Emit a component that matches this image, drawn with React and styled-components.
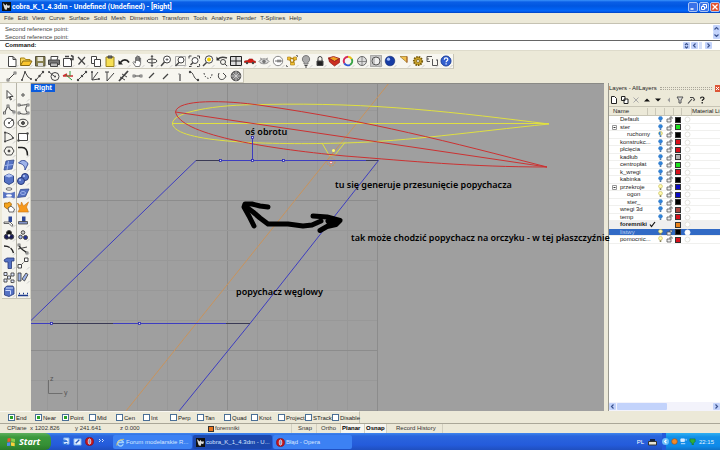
import React from "react";
import styled, { createGlobalStyle, css } from "styled-components";

const UI = `"Liberation Sans", Arial, sans-serif`;
const TITLE = `"Roboto", "Open Sans", sans-serif`;
const NOTE = `"Noto Sans", sans-serif`;

const Global = createGlobalStyle`
  *, *::before, *::after { box-sizing: border-box; }
  body { margin: 0; overflow: hidden; background: #ece9d8; }
  button, input { font: inherit; margin: 0; padding: 0; border: 0; background: none; color: inherit; }
  svg { display: block; }
`;

const Window = styled.div`
  display: flex;
  flex-direction: column;
  min-height: 100vh;
  font: 6px/8px ${UI};
  color: #222;
  background: #ece9d8;
`;

/* ---------- title and menu ---------- */

const TitleBar = styled.header`
  display: flex;
  align-items: center;
  gap: 1px;
  height: 13px;
  padding-left: 2px;
  background: linear-gradient(#3a93fb 0, #0b5fe6 2px, #0056e0 6px, #0266fa 11px, #0040c0 13px);
`;
const Title = styled.h1`
  flex: 1;
  margin: 0;
  font: bold 7px/12px ${TITLE};
  color: #fff;
  white-space: nowrap;
`;
const CaptionButton = styled.button`
  display: grid;
  place-items: center;
  width: 10px;
  height: 10px;
  border: 1px solid #a9c4f5;
  border-radius: 2px;
  background: ${(p) => (p.$close ? "#e2512c" : "#3a72e8")};
`;
const MenuBar = styled.nav`
  display: flex;
  height: 10px;
  padding: 0 4px;
  gap: 4px;
  line-height: 9px;
`;
const MenuItem = styled.button`
  color: #333;
  white-space: nowrap;
`;

/* ---------- command area ---------- */

const CommandArea = styled.section`
  border-top: 1px solid #c5c2b2;
  background: #fff;
  height: 28px;
  margin-bottom: 3px;
  border-bottom: 1px solid #dedbcb;
`;
const History = styled.div`
  display: flex;
  height: 17px;
  padding-left: 5px;
  border-bottom: 1px solid #666;
`;
const HistoryText = styled.div`
  flex: 1;
  padding-top: 1px;
  color: #444;
`;
const Spinner = styled.div`
  display: flex;
  flex-direction: column;
  width: 7px;
  padding-top: 1px;
`;
const Prompt = styled.label`
  display: flex;
  height: 9px;
  padding-left: 5px;
  font-weight: bold;
  color: #111;
`;
const PromptInput = styled.input`
  flex: 1;
  min-width: 0;
  outline: none;
`;
const PromptArrows = styled.div`
  display: flex;
  gap: 1px;
  padding: 1px 0 0;
  margin-right: 8px;
`;
const PromptThumb = styled.span`
  width: 3px;
  height: 7px;
  margin-right: 2px;
  background: #d5e0fb;
`;
const ScrollButton = styled.button`
  display: grid;
  place-items: center;
  width: 7px;
  height: 7px;
  border-radius: 1px;
  background: #c3d3fb;
`;

/* ---------- toolbars ---------- */

const ToolStrip = styled.div`
  display: flex;
  align-self: flex-start;
  height: ${(p) => (p.$tall ? 15 : 14)}px;
  padding-left: 5px;
  border-right: 1px solid #c9c6b6;
  border-bottom: 1px solid #cfccbd;
  background: #f7f6f0;
`;
const ToolButton = styled.button`
  width: 14px;
  height: 14px;
  display: grid;
  place-items: center;
`;
const Palette = styled.aside`
  display: grid;
  grid-template-columns: 14px 14px;
  grid-auto-rows: 14px;
  align-content: start;
  align-self: flex-start;
  margin-left: 2px;
  padding-top: 5px;
  background: linear-gradient(90deg, #f5f4ee 14px, #b5b3a8 14px, #b5b3a8 15px, #f5f4ee 15px);
  border-bottom: 1px solid #c9c6b6;
  border-right: 1px solid #d4d2c6;
`;

/* ---------- workspace ---------- */

const Workspace = styled.main`
  display: flex;
  flex: 1;
  min-height: 328px;
`;
const Viewport = styled.section`
  position: relative;
  flex: 1;
  min-width: 0;
  background: #9f9f9f;
  border-top: 1px solid #8a8a86;
`;
const Drawing = styled.svg`
  position: absolute;
  inset: 0;
  width: 100%;
  height: 100%;
`;
const ViewportTab = styled.button`
  position: absolute;
  left: 0;
  top: 0;
  width: 24px;
  height: 8px;
  background: #0a5bdd;
  color: #fff;
  font-weight: bold;
  font-size: 7px;
  line-height: 8px;
`;
const Note = styled.span`
  position: absolute;
  left: ${(p) => p.$x}px;
  top: ${(p) => p.$y}px;
  z-index: 2;
  font: 600 9px/12px ${NOTE};
  color: #000;
  white-space: nowrap;
`;

/* ---------- layers ---------- */

const LayersPanel = styled.aside`
  display: flex;
  flex-direction: column;
  width: 112px;
  margin-left: 4px;
  border-left: 1px solid #9a998f;
  background: #fff;
`;
const PanelTitle = styled.div`
  display: flex;
  align-items: center;
  height: 10px;
  background: #ece9d8;
  white-space: nowrap;
`;
const Grip = styled.span`
  flex: 1;
  height: 3px;
  margin: 0 3px;
  border-top: 1px dotted #aaa79a;
  border-bottom: 1px dotted #aaa79a;
`;
const PanelClose = styled.button`
  display: grid;
  place-items: center;
  width: 5px;
  height: 7px;
  background: #dd5636;
`;
const PanelTools = styled.div`
  display: flex;
  gap: 1px;
  height: 13px;
  align-items: center;
  background: #ece9d8;
`;
const PanelTool = styled.button`
  display: grid;
  place-items: center;
  width: 10px;
  height: 10px;
`;
const LayerTable = styled.table`
  display: block;
  font-size: 6px;
`;
const LayerHead = styled.thead`
  display: block;
  border-top: 1px solid #c8c5b5;
  border-bottom: 1px solid #c8c5b5;
  background: #ece9d8;
`;
const LayerBody = styled.tbody`
  display: grid;
  grid-auto-rows: 1fr;
  height: 128px;
`;
const rowColumns = css`
  display: grid;
  grid-template-columns: 39px 8px 9px 9px 8px 10px 1fr;
  align-items: center;
`;
const HeadRow = styled.tr`
  ${rowColumns}
  height: 8px;
`;
const HeadCell = styled.th`
  padding: 0;
  height: 7px;
  line-height: 7px;
  font-weight: normal;
  text-align: left;
  white-space: nowrap;
  border-right: 1px solid #cbc8b8;
  &:first-child { padding-left: 4px; }
  &:last-child { border: 0; }
`;
const LayerRow = styled.tr`
  ${rowColumns}
  min-height: 0;
  border-bottom: 1px solid #f0f0ee;
  background: ${(p) => (p.$selected ? "#316ac5" : p.$current ? "#efefef" : "#fff")};
  color: ${(p) => (p.$selected ? "#b9cdf0" : "#222")};
  font-weight: ${(p) => (p.$current ? "bold" : "normal")};
`;
const LayerCell = styled.td`
  padding: 0;
  height: 7px;
  line-height: 7px;
  display: flex;
  align-items: center;
  justify-content: center;
`;
const LayerName = styled(LayerCell)`
  justify-content: flex-start;
  gap: 3px;
  padding-left: ${(p) => (p.$depth ? 18 : p.$parent ? 3 : 11)}px;
  white-space: nowrap;
`;
const Swatch = styled.i`
  width: 6px;
  height: 6px;
  border: 1px solid #333;
  background: ${(p) => p.$color};
`;
const HScroll = styled.div`
  display: flex;
  gap: 1px;
  margin-top: auto;
  height: 9px;
  background: #f3f3fb;
  align-items: center;
`;
const Thumb = styled.div`
  width: 50px;
  height: 7px;
  margin-right: auto;
  border-radius: 1px;
  background: #c3d3fb;
`;

/* ---------- bottom bars ---------- */

const SnapBar = styled.form`
  display: flex;
  align-self: flex-start;
  height: 12px;
  padding-left: 8px;
  border-top: 1px solid #f9f8f2;
  border-right: 1px solid #c5c2b2;
`;
const SnapOption = styled.label`
  display: flex;
  align-items: center;
  gap: 1px;
  width: 27px;
  white-space: nowrap;
`;
const Check = styled.input`
  appearance: none;
  flex: none;
  width: 7px;
  height: 7px;
  border: 1px solid #4a6f96;
  background: #fff;
  &:checked {
    background: linear-gradient(135deg, #fff 25%, #29a329 25%, #29a329 75%, #fff 75%);
    box-shadow: inset 0 0 0 1px #fff;
  }
`;
const StatusBar = styled.footer`
  display: flex;
  height: 10px;
  border-top: 1px solid #aaa798;
  line-height: 9px;
`;
const Status = styled.span`
  display: flex;
  align-items: center;
  gap: 1px;
  width: ${(p) => p.$w}px;
  padding-left: ${(p) => p.$pad || 0}px;
  border-right: 1px solid ${(p) => (p.$edge ? "#d3d0c0" : "transparent")};
  background: ${(p) => (p.$on ? "#f7f6f0" : "none")};
  font-weight: ${(p) => (p.$on ? "bold" : "normal")};
  color: ${(p) => (p.$on ? "#000" : "#333")};
  white-space: nowrap;
`;
const TaskBar = styled.nav`
  display: flex;
  height: 17px;
  background: linear-gradient(#3f86ee 0, #2b66dd 3px, #245bdb 12px, #1f4fbf 17px);
  color: #fff;
`;
const Start = styled.button`
  display: flex;
  align-items: center;
  gap: 3px;
  width: 51px;
  padding-left: 6px;
  border-radius: 0 6px 6px 0;
  background: linear-gradient(#5fb05f 0, #3c9a3c 4px, #358f35 12px, #2a7a2a 17px);
  font: italic bold 9px/16px "Open Sans", sans-serif;
  color: #fff;
`;
const QuickLaunch = styled.div`
  display: flex;
  align-items: center;
  gap: 2px;
  width: 62px;
  padding-left: 9px;
`;
const QuickButton = styled.button`
  display: grid;
  place-items: center;
  width: 10px;
  height: 12px;
`;
const Task = styled.button`
  display: flex;
  align-items: center;
  gap: 1px;
  width: 79px;
  height: 14px;
  margin: 2px 1px 0 0;
  padding-left: 3px;
  border-radius: 2px;
  background: ${(p) => (p.$active ? "#1c48ae" : "#3c81f3")};
  color: #d9e6ff;
  white-space: nowrap;
`;
const Language = styled.div`
  display: flex;
  align-items: center;
  gap: 4px;
  margin-left: auto;
  padding-right: 5px;
`;
const Tray = styled.div`
  display: flex;
  align-items: center;
  gap: 2px;
  width: 58px;
  background: linear-gradient(90deg, #245bdb 4px, transparent 4px),
    linear-gradient(#2fb0f2 0, #1290e8 4px, #0f8bea 13px, #0f72c8 17px);
`;
const Clock = styled.time`
  margin-left: 1px;
  color: #e3f2ff;
`;

/* ---------- glyphs ---------- */

function Glyph({ size = 14, box = 14, children }) {
  return (
    <svg width={size} height={size} viewBox={`0 0 ${box} ${box}`} fill="none" stroke="#444" strokeWidth="1" aria-hidden="true">
      {children}
    </svg>
  );
}
const Chevron = ({ d }) => (
  <svg width="7" height="7" viewBox="0 0 7 7" fill="none" stroke="#3c5390" strokeWidth="1.2" aria-hidden="true">
    <path d={d} />
  </svg>
);
const UP = "M1.5 4.5 3.5 2.5 5.5 4.5";
const DOWN = "M1.5 2.5 3.5 4.5 5.5 2.5";
const LEFT = "M4.5 1.5 2.5 3.5 4.5 5.5";
const RIGHT = "M2.5 1.5 4.5 3.5 2.5 5.5";

const Corner = () => <path d="M11 13.5 13.5 11" stroke="#bbb" strokeWidth=".7" />;
const Dots = ({ at, fill = "#444", r = 1 }) => at.map(([x, y], i) => <circle key={i} cx={x} cy={y} r={r} fill={fill} stroke="none" />);
const Ends = ({ at }) => at.map(([x, y], i) => <rect key={i} x={x - 1} y={y - 1} width="2" height="2" fill="#fff" strokeWidth=".7" />);

const mainTools = [
  ["New", <path d="M3.500 2.500h4.500l3 3v7h-7.500zM8 2.500v3h3" fill="#fff" />],
  ["Open", <><path d="M1.500 11V4h4l1 1.500h4.500v2" fill="#f4d35c" stroke="#a98413" /><path d="M1.500 11.500 4 7h9l-2.500 4.500z" fill="#fbc62e" stroke="#8a6a10" /></>],
  ["Save", <><path d="M2.500 2.500h9.500v9.500h-9.500z" fill="#888150" stroke="#55503a" /><path d="M4.500 3h5.500v4h-5.500z" fill="#e9e7d8" stroke="none" /><path d="M5 9h5v3H5z" fill="#ddd" stroke="none" /></>],
  ["Print", <><path d="M4 6V2.500h7L10 6" fill="#fff" /><path d="M1.500 6h11v4.500h-11z" fill="#777" /><path d="M3.500 9h7v3.500h-7z" fill="#bbb" /></>],
  ["Notes", <><path d="M2.500 4.500h8v8h-8z" fill="#fff" /><path d="M4 2.500h4M10 1.500l2 1v3h-3" strokeWidth="1.500" /></>],
  ["Cut", <path d="M3 3l7 7.500M10 3l-6.500 7.500" strokeWidth="1.200" />],
  ["Copy", <><path d="M2.500 2.500h5v7h-5z" fill="#fff" /><path d="M5.500 5.500h6v7h-6z" fill="#fff" /></>],
  ["Paste", <><path d="M3 3h8v9.500H3z" fill="#f6df55" stroke="#9b8420" /><path d="M5 2h4v2H5z" fill="#777" /></>],
  ["Undo", <><path d="M3.500 8.500C6 5 10 5 12 8.500" stroke="#222" strokeWidth="1.600" /><path d="M1.500 6v4.500h4.500z" fill="#222" stroke="none" /></>],
  ["Pan", <path d="M4.500 12.500 2 8.500l.8-1 1.700 1.500V3.500h1.300V7 2h1.300v5V2.500h1.300V7.500 4h1.200v5.500l-1 3z" fill="#fff" stroke="#555" strokeWidth=".8" />],
  ["Rotate view", <><ellipse cx="7" cy="7" rx="5" ry="2" /><path d="M7 1.500v11" /><path d="M5.500 3 7 1l1.500 2zM5.500 11 7 13l1.500-2z" fill="#555" stroke="none" /></>],
  ["Zoom", <><circle cx="8" cy="5.500" r="3.500" fill="#fff" /><path d="M5.500 8 2 12" strokeWidth="1.500" /><path d="M6.500 5.500h3M8 4v3" strokeWidth=".7" /></>],
  ["Zoom window", <><path d="M2.500 2.500h10v9h-10z" stroke="#aaa" /><circle cx="8" cy="6" r="3" fill="#fff" /><path d="M6 8.500 2.500 12" strokeWidth="1.500" /></>],
  ["Zoom extents", <><path d="M2 4.500V2h2.500M10 2h2.500v2.500M12.500 10v2.500H10M4.500 12.500H2" /><circle cx="8" cy="6.500" r="3" fill="#fff" /><path d="M6 8.500 3.500 11" strokeWidth="1.500" /></>],
  ["Zoom selected", <><circle cx="8" cy="5.500" r="3.700" fill="#fff" /><circle cx="8" cy="5.500" r="2" fill="#f5d400" stroke="none" /><path d="M5.500 8.500 2 12" strokeWidth="1.500" /></>],
  ["Undo view", <><path d="M3 5c3-3 6-2 9-1" strokeWidth="1.500" /><path d="M1.500 2.500v4H5z" fill="#333" stroke="none" /><circle cx="8" cy="8" r="2.500" /><path d="M10 10l2 2" /></>],
  ["Four views", <><path d="M1.500 2.500h11v9h-11z" fill="#ddd" stroke="#222" /><path d="M1.500 7h11M7 2.500v9" stroke="#222" /></>],
  ["Shade", <><path d="M1.500 8.500V7l3-.5 2-1.500h3l1 1.800 2 .4v1.500z" fill="#d71b14" stroke="#8e120d" strokeWidth=".6" /><Dots at={[[4, 9], [10, 9]]} r={1.2} /></>],
  ["Hide", <><path d="M2 7.500c2-3.500 8-3.500 10 0-2 3-8 3-10 0z" fill="#ddd" stroke="#888" /><circle cx="7" cy="7.500" r="1.800" fill="#777" stroke="none" /><path d="M3 4l2 1M11 4 9 5" stroke="#999" /></>],
  ["Show plane", <><circle cx="7" cy="7" r="4.700" fill="#fff" stroke="#888" /><path d="M4 7h7M7 5.500v3M9 5.500v3" strokeWidth=".8" /></>],
  ["Select", <><path d="M1.500 11v1.500H3M11 1.500h1.500V3" stroke="#777" /><path d="M4 4l6 1M4.500 5l2.500 5M10 5l-3 5" stroke="#b5830c" strokeWidth="1.500" /><path d="M2.500 3h3v3h-3zM8.500 3h3v3h-3zM5.500 8.500h4V11h-4z" fill="#f0bf32" stroke="#a87a10" strokeWidth=".6" /></>],
  ["Bulb", <><path d="M7 1.500a3.700 3.700 0 0 1 2 6.800V10H5V8.300A3.700 3.700 0 0 1 7 1.500z" fill="#aaa" stroke="#777" /><path d="M5.500 11.500h3M6 13h2" /></>],
  ["Lock", <><path d="M5 7V4.500a2 2 0 0 1 4 0V7" /><path d="M4 7h6v4.500H4z" fill="#222" /></>],
  ["Layers", <><path d="M1.500 4l5-1.500 6 2-5 3z" fill="#f0a020" stroke="#a33" /><path d="M1.500 4l6 3.500 5-3v4L7.500 12 2.500 8z" fill="#cc2e20" stroke="#8b1a12" strokeWidth=".7" /></>],
  ["Properties", <><path d="M7 2.700A4.300 4.300 0 0 1 10.700 5" stroke="#eac01b" strokeWidth="2" /><path d="M10.700 5A4.300 4.300 0 0 1 9 10.800" stroke="#37a344" strokeWidth="2" /><path d="M9 10.800A4.300 4.300 0 0 1 3.300 9.200" stroke="#2d56d5" strokeWidth="2" /><path d="M3.300 9.200A4.300 4.300 0 0 1 7 2.700" stroke="#d52b5b" strokeWidth="2" /></>],
  ["Wire sphere", <><circle cx="7" cy="7" r="4.500" fill="#ddd" stroke="#666" /><path d="M2.500 7.500h9M7 2.500v9" stroke="#777" strokeWidth=".8" /></>],
  ["Sphere", <><path d="M1.500 1.500h11v11h-11z" stroke="#777" strokeDasharray="1 1" fill="#c4c4c4" /><circle cx="7" cy="7" r="4" fill="#eee" stroke="#555" /><path d="M5 4v6" stroke="#999" /></>],
  ["Render", <><circle cx="7" cy="7" r="4.800" fill="#163ca5" stroke="#0b236c" strokeWidth=".6" /><circle cx="5.500" cy="5.200" r="1.600" fill="#a9c4ff" stroke="none" /></>],
  ["Spotlight", <><path d="M3 2.500h7v6z" fill="#f1c04c" stroke="#9a7425" strokeWidth=".7" /><path d="M10 2.500v6" stroke="#a65d2a" /></>],
  ["Options", <><circle cx="7" cy="7" r="4.200" fill="#c9a227" stroke="#75590c" strokeDasharray="1.500 1" strokeWidth="1.800" /><circle cx="7" cy="7" r="1.500" fill="#f7f6f0" stroke="#75590c" strokeWidth=".7" /></>],
  ["Dimension", <path d="M2 2.500h5M2 2.500v5h3M7.500 5v6.500M7.500 11.500h5V6M2 5h2M11 6h2" strokeWidth=".9" />],
  ["Help", <><circle cx="7" cy="7" r="5" fill="#3360cf" stroke="#1b3f9c" /><path d="M5.300 5.700c0-2.400 3.500-2.300 3.500-.2 0 1.300-1.700 1.300-1.700 2.700M7.100 9.200v1.300" stroke="#fff" strokeWidth="1.200" /></>],
];

const curveTools = [
  ["Line", <><path d="M3.500 10.500l6-6" /><Ends at={[[3, 11], [10, 4]]} /></>],
  ["Polyline", <><path d="M3 11 6 3l3 5 3 2" /><Dots at={[[3, 11], [6, 3], [12, 10]]} /></>],
  ["Line segments", <><path d="M3 11l7-8" /><Dots at={[[3, 11], [6.5, 7], [10, 3]]} r={1.2} /></>],
  ["Arc circle", <><circle cx="8" cy="7.500" r="4" /><path d="M2 3l5 4" /><Dots at={[[8, 7.5], [2, 3]]} /></>],
  ["Normal", <><path d="M2 7l4-2M2 7h10" stroke="#c33" strokeWidth="1.400" /><path d="M5 6l6 5M9 2v5" stroke="#2a9a3a" /></>],
  ["Tangent", <><path d="M3 11 6 8M8 6l3-3" /><Dots at={[[3, 11], [7, 7], [11, 3]]} r={1.2} /></>],
  ["Angle", <><path d="M3 3v8l7-1M3 11l6-8" /><Dots at={[[3, 3], [10, 10]]} /></>],
  ["Bisector", <path d="M4 3v9M4 12l7-8M2 3h4" />],
  ["Four point", <><path d="M2 12l9-10" strokeWidth="1.800" /><path d="M5 5l5 3M3 8l5 3" /></>],
  ["Perpendicular", <><path d="M4 7h5" /><Ends at={[[3, 7], [10, 7]]} /></>],
  ["Two curves", <path d="M4 9l5-5" strokeWidth="1.300" />],
  ["Extend", <path d="M4 10l5-5" strokeWidth="1.300" />],
  ["Vertical", <><path d="M7 5v7" strokeWidth="1.200" /><path d="M5 5h2" stroke="#999" /></>],
  ["Curve through", <><path d="M3 3c4 0 3 7 8 8" /><Dots at={[[3, 3], [11, 11]]} r={1.2} /></>],
  ["Points", <path d="M3 4c1 7 8 7 8 1" strokeDasharray="1.500 1.500" />],
  ["Hook", <path d="M4 4c-3 7 5 9 7 3L8 4" />],
  ["Mesh ball", <><circle cx="7" cy="7" r="4.800" fill="#777" /><path d="M2 7h10M7 2v10M4 4l6 6M10 4l-6 6" stroke="#ddd" strokeWidth=".7" /></>],
];

const blue = "#5572c4";
const pale = "#9db3ea";
const paletteTools = [
  ["Pointer", <path d="M5 2.500v8l2-2 1.500 3.500 1-.5L8 8.500h3z" fill="#fff" />],
  ["Point", <circle cx="7" cy="7" r="1.200" />],
  ["Polyline", <><path d="M2.500 11 6 3.500 8.500 8l3.500 1.500" /><Ends at={[[2.5, 11], [6, 4], [12, 10]]} /></>],
  ["Control curve", <><path d="M3 3c3 1 6-1 9 0-3 2-3 6 0 8-3 2-6 1-9 0" /><Ends at={[[3, 3], [12, 3], [3, 11], [12, 11]]} /></>],
  ["Circle", <><circle cx="7" cy="7" r="4.800" fill="#fff" /><path d="M7 7l3-3" strokeWidth=".7" /><Dots at={[[7, 7], [10.5, 4]]} /></>],
  ["Ellipse", <><ellipse cx="7" cy="7" rx="5" ry="3.800" /><circle cx="7" cy="7" r="1.500" fill="#555" /></>],
  ["Arc", <><path d="M3 2.500C7 3 10 5 11 8M3 2.500v9l8-3" /><Dots at={[[3, 2.5], [3, 11.5], [11, 8]]} /></>],
  ["Rectangle", <><path d="M2.500 3.500h9v7h-9z" fill="#fff" /><Dots at={[[2.5, 10.5], [11.5, 3.5]]} r={1.2} /></>],
  ["Polygon", <><path d="M4.500 3h5l2.500 4-2.500 4h-5L2 7z" /><circle cx="7" cy="7" r="1" fill="#333" /></>],
  ["Fillet", <path d="M2 3.500h4c4 0 5.500 3 5.500 8" stroke="#222" strokeWidth="1.500" />],
  ["Surface points", <><path d="M4 3l8-1-2 9-8 1z" fill={blue} stroke="#334a8c" strokeWidth=".8" /><path d="M6.500 3 5 12M3 7.500l8-1" stroke={pale} /></>],
  ["Surface curve", <path d="M2.500 5c3-4 8-3 9.500 1l-3 6c0-4-2-6-6.500-7z" fill={pale} stroke="#3c519a" />],
  ["Box", <><path d="M2.500 4 7 2l4.500 2v6L7 12.500 2.500 10z" fill={blue} stroke="#334a8c" /><path d="M2.500 4 7 5.500 11.500 4 7 2z" fill="#b4c6f6" stroke="none" /></>],
  ["Spheres", <><circle cx="9" cy="5" r="3.500" fill={blue} stroke="#26377a" /><circle cx="5" cy="9" r="3.500" fill={blue} stroke="#26377a" /><Dots at={[[8, 4], [4, 8]]} fill="#bccbfa" /></>],
  ["Project", <><ellipse cx="7" cy="3" rx="3" ry="1.200" fill="#fff" strokeWidth=".8" /><path d="M1.500 6c3 2 8 2 11 0v6c-3-1.500-8-1.500-11 0z" fill={blue} stroke="#4a64b4" strokeWidth=".7" /><ellipse cx="7" cy="9.500" rx="3" ry="1.200" fill="#fff" stroke="none" /></>],
  ["Flatten", <><path d="M4.500 3.500 13 3l-3.500 7.500-8 1z" fill={blue} stroke="#334a8c" strokeWidth=".8" /><ellipse cx="7" cy="7" rx="2.500" ry="1.500" stroke={pale} /></>],
  ["Boolean", <><path d="M2.500 3h3l2-1 2 2-1 3-3 2-3-2z" fill="#f5a31b" stroke="#a66407" strokeWidth=".8" /><path d="M6 8l3-2 3.500 3-1 3H7z" fill="#fff" strokeWidth=".8" /></>],
  ["Explode", <path d="M1.500 3l3 3 1-4 2 4 5-4-2 5 2 5H2l1.500-3z" fill="#f7991c" stroke="#c97312" strokeWidth=".6" />],
  ["Trim", <><path d="M6.500 2.500h3.500V8H6.500z" fill="#2c4797" stroke="none" /><path d="M2 8h6l3 3-1 1.500-3-3H2z" fill="#fff" strokeWidth=".8" /></>],
  ["Split", <><path d="M6 2.500h3.500V9H6z" fill="#2c4797" stroke="none" /><path d="M2.500 7.500h9v2.500h-9z" fill="#8092c8" strokeWidth=".8" /></>],
  ["Group", <><circle cx="7" cy="5" r="2.500" fill="#111" /><circle cx="4.800" cy="8.700" r="2.500" fill="#181a55" /><circle cx="9.200" cy="8.700" r="2.500" fill="#181a55" /><Dots at={[[7, 7.5]]} fill="#fff" r={1.2} /></>],
  ["Ungroup", <><circle cx="7" cy="4.500" r="1.800" fill="#ccc" /><circle cx="4.500" cy="9" r="1.800" fill={pale} /><circle cx="9.500" cy="9.500" r="2" fill="#20309a" /></>],
  ["Extend curve", <path d="M2 4c5 0 8 2 9.500 7" stroke="#222" strokeWidth="1.300" strokeDasharray="6 1" />],
  ["Edit curve", <><path d="M3 3c1 5 4 4 8 8" stroke="#222" strokeWidth="1.300" /><path d="M2 7l9-2" /><Ends at={[[3, 3], [11, 11]]} /></>],
  ["Text", <path d="M2 4l3-2h7v3H9.500v7.500H6V6H3z" fill={blue} stroke="#26377a" strokeWidth=".8" />],
  ["Move", <><path d="M4 10l6-6" strokeDasharray="1.500 1" /><path d="M2 8.500h3.500V12H2zM8.500 2H12v3.500H8.500z" fill="#fff" /></>],
  ["Array", <path d="M2 2.500h3v3H2zM9 3h3v3H9zM5.500 6h3v3h-3zM2 9h3v3H2zM9 10h3v2.500H9z" fill="#dde5ff" strokeWidth=".9" />],
  ["Orient", <path d="M2 3h3v8H2zM6 9l4-6 2 1.500L8.500 11z" fill={pale} strokeWidth=".9" />],
  ["Solid", <><path d="M2.500 4 5 2h6l1 2v6L7 12.500 2.500 11z" fill={blue} stroke="#26377a" strokeWidth=".8" /><path d="M3.500 6.500h5v4M4 4h7" stroke="#cfdcff" /></>],
  ["Contour", <path d="M2 11.500h10M3 9.500h1M7 9.500h1M11 9.500h1" stroke="#1c3a8c" strokeWidth="1.300" />],
];

const layers = [
  { name: "Default", color: "#000" },
  { name: "ster", color: "#1de21d", parent: true },
  { name: "ruchomy", color: "#000", depth: 1, half: true },
  { name: "konstrukc...", color: "#d8121c" },
  { name: "płcięcia", color: "#d8121c" },
  { name: "kadłub", color: "#b5b5b5" },
  { name: "centropłat", color: "#1de21d" },
  { name: "k_wregi", color: "#d8121c" },
  { name: "kabinka", color: "#000" },
  { name: "przekroje", color: "#0a0ac8", parent: true, lit: true },
  { name: "ogon", color: "#0a0ac8", depth: 1, lit: true },
  { name: "ster_", color: "#000", depth: 1 },
  { name: "wregi 3d", color: "#a8443c" },
  { name: "temp", color: "#d8121c" },
  { name: "foremniki", color: "#ea831a", current: true },
  { name: "listwy", color: "#000", selected: true, lit: true },
  { name: "pomocnic...", color: "#d8121c", lit: true },
];

const BulbIcon = ({ lit, half }) => (
  <svg width="5" height="7" viewBox="0 0 5 7" aria-hidden="true">
    <circle cx="2.500" cy="2.300" r="1.900" fill={lit ? "#fffbb0" : half ? "#f4eda0" : "#2f83dc"} stroke={lit || half ? "#c5b84e" : "#3a7fc4"} strokeWidth=".6" />
    {half && <path d="M2.500 .4a1.900 1.900 0 0 0 0 3.800z" fill="#2f83dc" />}
    <path d="M1.700 4.200h1.600v1.800H1.700z" fill={lit ? "#8d865a" : "#4a76aa"} />
  </svg>
);
const LockIcon = () => (
  <svg width="7" height="7" viewBox="0 0 7 7" fill="none" stroke="#555" strokeWidth=".8" aria-hidden="true">
    <path d="M1 3h4v3H1zM4 3V1h2v2" fill="#eee" />
  </svg>
);

const GRID_X = [47, 77, 107, 137, 167, 197, 227, 257, 287, 317, 347, 377];
const GRID_Y = [110, 140, 170, 200, 230, 260, 290, 320, 350, 380, 410];

function Scene() {
  return (
    <Drawing aria-label="Right view">
      <g transform="translate(-31 -84)" fill="none">
        {GRID_X.map((x) => (
          <path key={x} d={`M${x}.5 84V411`} stroke={(x - 77) % 150 === 0 ? "#8c8c8c" : "#989898"} />
        ))}
        {GRID_Y.map((y) => (
          <path key={y} d={`M31 ${y}.5H377`} stroke={y % 150 === 50 ? "#8c8c8c" : "#989898"} />
        ))}
        <path d="M389 83 126 411" stroke="#c8935c" />
        <circle cx="331" cy="162" r="4" stroke="#c8935c" strokeDasharray="2 1" />
        <g stroke="#e0e040">
          <path d="M172.500 124C171 112 215 104.500 262 104.500C375 102 460 113 549 124C470 132 410 141 345 143C270 145 176 143 172.500 124z" />
          <path d="M172 123.500H549" />
          <path d="M322 143l7 12h6l10-12.500" />
        </g>
        <g stroke="#cc3232">
          <path d="M175.500 112C177 99 225 100 262 105.500C370 121 450 142 547 167C470 167 410 161 345 156C260 148 180 134 175.500 112z" />
          <path d="M175.500 112 547 167" />
        </g>
        <path d="M31 320.500 196 160.500H378.500L250 323.500 179 411M250 323.500H31M252.500 137V160" stroke="#3d3dc0" />
        <path d="M196 160.500h24M366 160.500h12M53 323.500h60M226 323.500h24" stroke="#3a3a55" />
        {[[220, 160], [252, 160], [283, 160], [252, 137], [51, 323], [139, 323]].map(([x, y]) => (
          <rect key={`${x}-${y}`} x={x - 0.5} y={y - 0.5} width="2" height="2" fill="#d8d8ff" stroke="#2a2ab0" strokeWidth=".8" />
        ))}
        <circle cx="333.500" cy="150.500" r="1.500" fill="#ffff70" />
        <circle cx="331" cy="162.500" r="1.200" fill="#fff" stroke="#d84a3a" strokeWidth=".6" />
        <g stroke="#000" strokeLinecap="round" strokeLinejoin="round" strokeWidth="5">
          <path d="M268 207l-8-1-8-2-7 0-1 3 5 9 5 10" />
          <path d="M245 206l8 6 7 6 8 6 20 0 15 2 9-1 9-4" />
          <path d="M313 216l14 1 13 3.500-4 4-9 2-7 4" />
          <path d="M328 221l10 0-8 3z" fill="#000" />
        </g>
        <path d="M48.500 380v13.500h14" stroke="#6e6e6e" />
        <g fill="#555" fontFamily="Liberation Sans" fontSize="7">
          <text x="50" y="381">z</text>
          <text x="64" y="395">y</text>
        </g>
      </g>
    </Drawing>
  );
}

const menus = ["File", "Edit", "View", "Curve", "Surface", "Solid", "Mesh", "Dimension", "Transform", "Tools", "Analyze", "Render", "T-Splines", "Help"];
const snaps = ["End", "Near", "Point", "Mid", "Cen", "Int", "Perp", "Tan", "Quad", "Knot", "Project", "STrack", "Disable"];

const panelIcons = [
  ["New layer", <path d="M2.500 1.500h3l2 2v5h-5z" fill="#fff" stroke="#222" />],
  ["New sublayer", <path d="M1.500 1.500h3.500v4H1.500zM4 4h4v4.500H4z" fill="#fff" stroke="#222" />],
  ["Delete", <path d="M2.500 2.500l5 5M7.500 2.500l-5 5" stroke="#aaa" />],
  ["Up", <path d="M2 6.500 5 3.500l3 3z" fill="#111" stroke="none" />],
  ["Down", <path d="M2 3.500h6L5 6.500z" fill="#111" stroke="none" />],
  ["Left", <path d="M6 2.500v5L3.500 5z" fill="#999" stroke="none" />],
  ["Filter", <path d="M2 2h6L6 5v3H4V5z" fill="#ddd" stroke="#555" />],
  ["Tools", <path d="M2 8.500 6 4M4 2.500h3l1.500 2-1 1.500" stroke="#444" strokeWidth="1.100" />],
  ["Help", <path d="M3.500 3.500c0-2 3.500-2 3.500 0 0 1.200-1.800 1-1.800 2.500M5.200 7v1.500" stroke="#111" strokeWidth="1.200" />],
];

const OperaIcon = () => (
  <Glyph size={9} box={10}><circle cx="5" cy="5" r="4.500" fill="#c3161c" stroke="#7c0a0e" strokeWidth=".6" /><ellipse cx="5" cy="5" rx="1.500" ry="3" fill="#7d90c8" stroke="#fff" strokeWidth=".7" /></Glyph>
);
const IEIcon = () => (
  <Glyph size={9} box={10}><path d="M8 7A3.200 3.200 0 1 1 8.200 5H2.500" stroke="#9fd0ff" strokeWidth="1.600" /><path d="M1 8.500C0 5 5 1 9 1.500" stroke="#f2cf4a" strokeWidth=".9" /></Glyph>
);
const RhinoIcon = () => (
  <Glyph size={9} box={10}><path d="M0 0h10v10H0z" fill="#111" stroke="none" /><path d="M1 1l3 3 1-2 1 2 3 0-1 3-2-1-1 3-2-1-1-3z" fill="#ddd" stroke="none" /></Glyph>
);

export default function App() {
  return (
    <Window>
      <Global />
      <TitleBar>
        <RhinoIcon />
        <Title>cobra_K_1_4.3dm - Undefined (Undefined) - [Right]</Title>
        <CaptionButton aria-label="Minimize"><Glyph size={8} box={8}><path d="M1.500 6h3" stroke="#fff" strokeWidth="1.500" /></Glyph></CaptionButton>
        <CaptionButton aria-label="Restore"><Glyph size={8} box={8}><path d="M3 3V1.500h3.500V5H5M1.500 3.500h3v3h-3z" stroke="#fff" /></Glyph></CaptionButton>
        <CaptionButton $close aria-label="Close"><Glyph size={8} box={8}><path d="M1.500 1.500l5 5M6.500 1.500l-5 5" stroke="#fff" strokeWidth="1.300" /></Glyph></CaptionButton>
      </TitleBar>
      <MenuBar>{menus.map((m) => <MenuItem key={m}>{m}</MenuItem>)}</MenuBar>
      <CommandArea>
        <History>
          <HistoryText>Second reference point:<br />Second reference point:</HistoryText>
          <Spinner>
            <ScrollButton aria-label="Scroll up"><Chevron d={UP} /></ScrollButton>
            <ScrollButton aria-label="Scroll down"><Chevron d={DOWN} /></ScrollButton>
          </Spinner>
        </History>
        <Prompt>
          Command:
          <PromptInput type="text" />
          <PromptArrows>
            <ScrollButton aria-label="History"><Chevron d="M2 3 3.500 1.500 5 3M2 4.500 3.500 6 5 4.500" /></ScrollButton>
            <ScrollButton aria-label="Left"><Chevron d={LEFT} /></ScrollButton>
            <PromptThumb />
            <ScrollButton aria-label="Right"><Chevron d={RIGHT} /></ScrollButton>
          </PromptArrows>
        </Prompt>
      </CommandArea>
      <ToolStrip $tall>
        {mainTools.map(([name, art]) => (
          <ToolButton key={name} aria-label={name}><Glyph>{art}<Corner /></Glyph></ToolButton>
        ))}
      </ToolStrip>
      <ToolStrip>
        {curveTools.map(([name, art]) => (
          <ToolButton key={name} aria-label={name}><Glyph>{art}</Glyph></ToolButton>
        ))}
      </ToolStrip>

      <Workspace>
        <Palette>
          {paletteTools.map(([name, art]) => (
            <ToolButton key={name} aria-label={name}><Glyph>{art}<Corner /></Glyph></ToolButton>
          ))}
        </Palette>
        <Viewport>
          <Scene />
          <ViewportTab>Right</ViewportTab>
          <Note $x={214} $y={42}>oś obrotu</Note>
          <Note $x={304} $y={95}>tu się generuje przesunięcie popychacza</Note>
          <Note $x={320} $y={148}>tak może chodzić popychacz na orczyku - w tej płaszczyźnie</Note>
          <Note $x={205} $y={202}>popychacz węglowy</Note>
        </Viewport>
        <LayersPanel>
          <PanelTitle>
            Layers - AllLayers
            <Grip />
            <PanelClose aria-label="Close layers"><Glyph size={5} box={5}><path d="M1 1l3 3M4 1 1 4" stroke="#fff" /></Glyph></PanelClose>
          </PanelTitle>
          <PanelTools>
            {panelIcons.map(([name, art]) => (
              <PanelTool key={name} aria-label={name}><Glyph size={10} box={10}>{art}</Glyph></PanelTool>
            ))}
          </PanelTools>
          <LayerTable>
            <LayerHead>
              <HeadRow>
                <HeadCell>Name</HeadCell><HeadCell /><HeadCell /><HeadCell /><HeadCell /><HeadCell /><HeadCell>Material Li</HeadCell>
              </HeadRow>
            </LayerHead>
            <LayerBody>
              {layers.map((l) => (
                <LayerRow key={l.name} $selected={l.selected} $current={l.current}>
                  <LayerName $depth={l.depth} $parent={l.parent}>
                    {l.parent && (
                      <Glyph size={5} box={5}><path d="M.5.500h4v4h-4z" fill="#fff" stroke="#999" /><path d="M1.500 2.500h2" stroke="#333" /></Glyph>
                    )}
                    {l.name}
                  </LayerName>
                  <LayerCell>{l.current && <Glyph size={7} box={7}><path d="M1 3.500 2.500 5.500 6 1" stroke="#111" strokeWidth="1.200" /></Glyph>}</LayerCell>
                  <LayerCell>{!l.current && <BulbIcon lit={l.lit} half={l.half} />}</LayerCell>
                  <LayerCell>{!l.current && <LockIcon />}</LayerCell>
                  <LayerCell><Swatch $color={l.color} /></LayerCell>
                  <LayerCell><Glyph size={7} box={7}><circle cx="3.500" cy="3.500" r="2.500" fill="#fff" stroke={l.selected ? "#fff" : "#e4e4de"} /></Glyph></LayerCell>
                  <LayerCell />
                </LayerRow>
              ))}
            </LayerBody>
          </LayerTable>
          <HScroll>
            <ScrollButton aria-label="Scroll left"><Chevron d={LEFT} /></ScrollButton>
            <Thumb />
            <ScrollButton aria-label="Scroll right"><Chevron d={RIGHT} /></ScrollButton>
          </HScroll>
        </LayersPanel>
      </Workspace>

      <SnapBar>
        {snaps.map((s, i) => (
          <SnapOption key={s}><Check type="checkbox" defaultChecked={i < 3} />{s}</SnapOption>
        ))}
      </SnapBar>
      <StatusBar>
        <Status $w={29} $pad={7}>CPlane</Status>
        <Status $w={45} $pad={1}>x 1202.826</Status>
        <Status $w={45} $pad={1}>y 241.641</Status>
        <Status $w={88} $pad={1}>z 0.000</Status>
        <Status $w={85} $pad={1} $edge><Swatch $color="#ea731a" />foremniki</Status>
        <Status $w={25} $pad={6} $edge>Snap</Status>
        <Status $w={24} $pad={4} $edge>Ortho</Status>
        <Status $w={24} $pad={1} $on $edge>Planar</Status>
        <Status $w={22} $pad={1} $on $edge>Osnap</Status>
        <Status $w={56} $pad={9} $edge>Record History</Status>
      </StatusBar>
      <TaskBar>
        <Start>
          <Glyph size={10} box={10}>
            <g stroke="none"><path d="M1.500 1.500 4.500 1v3.500l-3 .5z" fill="#f0592c" /><path d="M5.200 1.200 9 2v3l-3.800-.6z" fill="#8ecf4b" /><path d="M1 5.800l3.300-.5v3.500L1 9z" fill="#4f8cf0" /><path d="M5 5.300l3.700.5v3.500L5 8.800z" fill="#fbd03c" /></g>
          </Glyph>
          Start
        </Start>
        <QuickLaunch>
          <QuickButton aria-label="Mail"><Glyph size={9} box={10}><path d="M3 1h6v7H3z" fill="#dceaff" stroke="#6aa5ee" /><path d="M6.500 7A2.500 2.500 0 1 1 6.500 5H3" stroke="#2a6fd8" strokeWidth="1.300" /></Glyph></QuickButton>
          <QuickButton aria-label="Desktop"><Glyph size={9} box={10}><path d="M1 2h8v7H1z" fill="#e8f1ff" stroke="#6aa5ee" /><path d="M3 7l4-4" stroke="#2a5fc0" strokeWidth="1.500" /></Glyph></QuickButton>
          <QuickButton aria-label="Opera"><OperaIcon /></QuickButton>
          <QuickButton aria-label="More"><Glyph size={8} box={8}><path d="M2 1l1.500 1.500L2 4M5 1l1.500 1.500L5 4" stroke="#dce8ff" /></Glyph></QuickButton>
        </QuickLaunch>
        <Task><IEIcon />Forum modelarskie R...</Task>
        <Task $active><RhinoIcon />cobra_K_1_4.3dm - U...</Task>
        <Task><OperaIcon />Błąd - Opera</Task>
        <Language>
          PL
          <Glyph size={9} box={9}><path d="M.5 4.500h8V8h-8z" fill="#e8e4d4" stroke="#333" /><path d="M2 3h5" stroke="#111" strokeWidth="1.500" /></Glyph>
        </Language>
        <Tray>
          <Glyph size={7} box={8}><circle cx="4" cy="4" r="4" fill="#6cc0fa" stroke="none" /><path d="M5 2 3 4l2 2" stroke="#fff" strokeWidth="1.300" /></Glyph>
          <Glyph size={7} box={8}><circle cx="4" cy="4" r="3.200" fill="#f08a2c" stroke="#a94e0e" strokeWidth=".7" /></Glyph>
          <Glyph size={7} box={8}><path d="M1 1h4v3H1zM1 6.500h5M7 1v2" fill="#d7e9ff" stroke="#d7e9ff" /></Glyph>
          <Glyph size={7} box={8}><path d="M1 1h6v3L5 6v2H3.500V6L1 4z" fill="#2fae3a" stroke="#176b20" strokeWidth=".6" /></Glyph>
          <Clock>22:15</Clock>
        </Tray>
      </TaskBar>
    </Window>
  );
}
